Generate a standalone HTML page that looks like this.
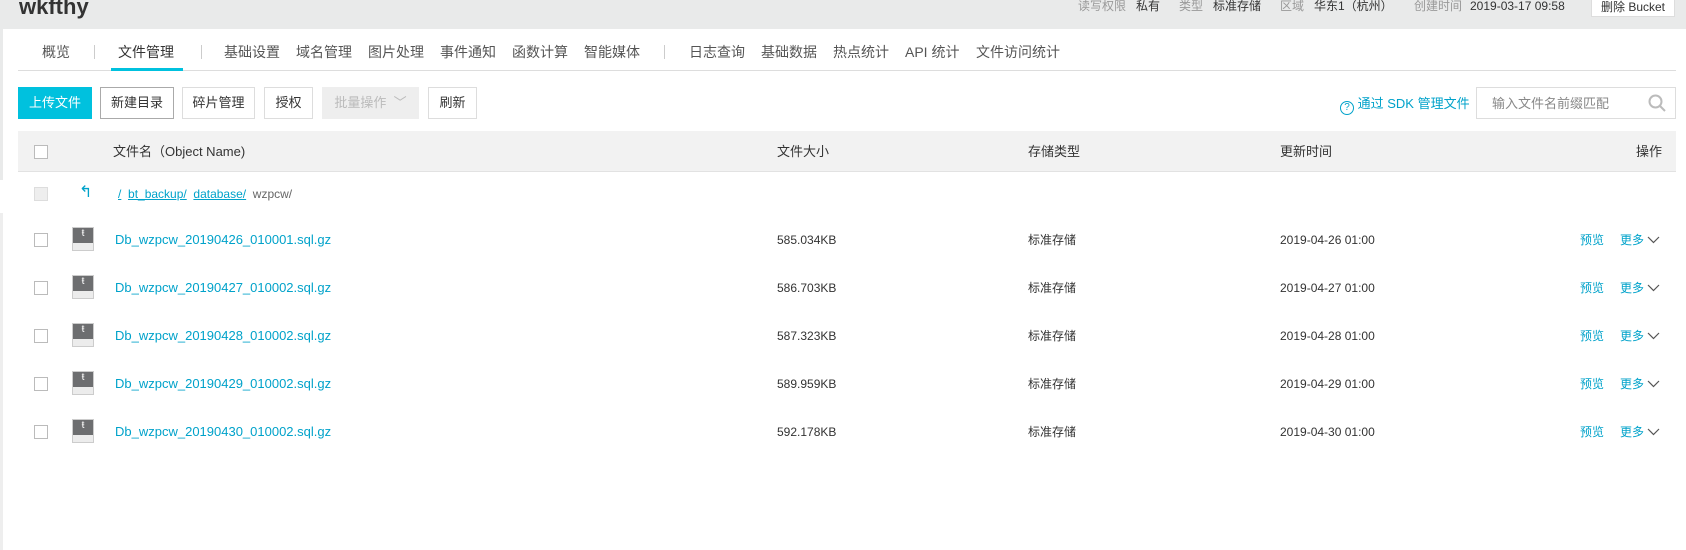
<!DOCTYPE html>
<html><head><meta charset="utf-8"><style>
*{margin:0;padding:0;box-sizing:border-box}
body{width:1686px;height:550px;background:#fff;position:relative;overflow:hidden;font-family:"Liberation Sans","Noto Sans CJK SC",sans-serif;color:#333;font-size:13px}
.a{position:absolute;white-space:nowrap;line-height:18px}
.hdr{left:0;top:0;width:1686px;height:29px;background:#e9eaea}
.g{color:#999}
.btn{position:absolute;top:87px;height:32px;border:1px solid #ddd;background:#fff;font-size:13px;line-height:30px;text-align:center;color:#333}
.cb{position:absolute;width:14px;height:14px;border:1px solid #bbb;background:#fff}
.lk{color:#00a2ca}
.nav{top:43px;font-size:14px;color:#555}
.sep{top:45px;width:1px;height:14px;background:#ccc}
.m{top:-3px;font-size:12px}
</style></head><body>
<div class="a hdr"></div>
<div class="a" style="left:0;top:29px;width:3px;height:151px;background:#e9eaea"></div>
<div class="a" style="left:0;top:213px;width:3px;height:337px;background:#eee"></div>
<div class="a" style="left:19px;top:-5px;font-size:22px;line-height:24px;font-weight:bold;color:#333">wkfthy</div>
<div class="a m" style="left:1078px"><span class="g">读写权限</span></div>
<div class="a m" style="left:1136px">私有</div>
<div class="a m" style="left:1179px"><span class="g">类型</span></div>
<div class="a m" style="left:1213px">标准存储</div>
<div class="a m" style="left:1280px"><span class="g">区域</span></div>
<div class="a m" style="left:1314px">华东1（杭州）</div>
<div class="a m" style="left:1414px"><span class="g">创建时间</span></div>
<div class="a m" style="left:1470px">2019-03-17 09:58</div>
<div class="a" style="left:1591px;top:-1px;width:84px;height:18px;background:#fff;border:1px solid #ddd;font-size:12px;line-height:14px;text-align:center">删除 Bucket</div>

<div class="a nav" style="left:42px">概览</div>
<div class="a sep" style="left:94px"></div>
<div class="a nav" style="left:118px;color:#333">文件管理</div>
<div class="a sep" style="left:201px"></div>
<div class="a nav" style="left:224px">基础设置</div>
<div class="a nav" style="left:296px">域名管理</div>
<div class="a nav" style="left:368px">图片处理</div>
<div class="a nav" style="left:440px">事件通知</div>
<div class="a nav" style="left:512px">函数计算</div>
<div class="a nav" style="left:584px">智能媒体</div>
<div class="a sep" style="left:664px"></div>
<div class="a nav" style="left:689px">日志查询</div>
<div class="a nav" style="left:761px">基础数据</div>
<div class="a nav" style="left:833px">热点统计</div>
<div class="a nav" style="left:905px">API 统计</div>
<div class="a nav" style="left:976px">文件访问统计</div>
<div class="a" style="left:18px;top:70px;width:1658px;height:1px;background:#ddd"></div>
<div class="a" style="left:111px;top:68px;width:72px;height:3px;background:#00c1de"></div>

<div class="btn" style="left:18px;width:74px;background:#00c1de;border-color:#00c1de;color:#fff">上传文件</div>
<div class="btn" style="left:100px;width:74px;border-color:#aaa">新建目录</div>
<div class="btn" style="left:182px;width:73px">碎片管理</div>
<div class="btn" style="left:264px;width:49px">授权</div>
<div class="btn" style="left:322px;width:97px;background:#eee;border-color:#eee;color:#bbb">批量操作 &nbsp;﹀</div>
<div class="btn" style="left:428px;width:49px">刷新</div>
<div class="a lk" style="left:1340px;top:95px;font-size:13px"><span style="display:inline-block;width:14px;height:14px;border:1px solid #00a2ca;border-radius:50%;font-size:10px;line-height:12px;text-align:center;vertical-align:-2px">?</span> 通过 SDK 管理文件</div>
<div class="a" style="left:1476px;top:87px;width:200px;height:32px;border:1px solid #ddd"></div>
<div class="a" style="left:1492px;top:95px;color:#888">输入文件名前缀匹配</div>
<svg class="a" style="left:1648px;top:94px" width="18" height="18"><circle cx="7.5" cy="7.5" r="6" fill="none" stroke="#bbb" stroke-width="2"/><path d="M12 12 L17 17" stroke="#bbb" stroke-width="2"/></svg>

<div class="a" style="left:18px;top:131px;width:1658px;height:41px;background:#f2f2f2;border-bottom:1px solid #e2e2e2"></div>
<div class="cb" style="left:34px;top:145px"></div>
<div class="a" style="left:113px;top:143px">文件名（Object Name)</div>
<div class="a" style="left:777px;top:143px">文件大小</div>
<div class="a" style="left:1028px;top:143px">存储类型</div>
<div class="a" style="left:1280px;top:143px">更新时间</div>
<div class="a" style="left:1636px;top:143px">操作</div>

<div class="cb" style="left:34px;top:187px;background:#eee;border-color:#ddd"></div>
<div class="a lk" style="left:79px;top:184px;font-size:16px">↰</div>
<div class="a" style="left:118px;top:185px;font-size:12px"><span class="lk" style="text-decoration:underline">/</span>&nbsp; <span class="lk" style="text-decoration:underline">bt_backup/</span>&nbsp; <span class="lk" style="text-decoration:underline">database/</span>&nbsp; <span style="color:#666">wzpcw/</span></div>

<div id="rows"></div>
<script>
var d=[["20190426_010001","585.034KB","2019-04-26 01:00"],["20190427_010002","586.703KB","2019-04-27 01:00"],["20190428_010002","587.323KB","2019-04-28 01:00"],["20190429_010002","589.959KB","2019-04-29 01:00"],["20190430_010002","592.178KB","2019-04-30 01:00"]];
var h="";d.forEach(function(r,i){var y=240+i*48;
h+='<div class="cb" style="left:34px;top:'+(y-7)+'px"></div>';
h+='<div class="a" style="left:72px;top:'+(y-13)+'px;width:22px;height:24px;background:#ececec;border:1px solid #ccc"><div style="height:15px;background:#6d6e70;color:#fff;font-size:10px;line-height:12px;text-align:center">ŧ</div></div>';
h+='<div class="a lk" style="left:115px;top:'+(y-9)+'px">Db_wzpcw_'+r[0]+'.sql.gz</div>';
h+='<div class="a" style="left:777px;top:'+(y-9)+'px;font-size:12px">'+r[1]+'</div>';
h+='<div class="a" style="left:1028px;top:'+(y-9)+'px;font-size:12px">标准存储</div>';
h+='<div class="a" style="left:1280px;top:'+(y-9)+'px;font-size:12px">'+r[2]+'</div>';
h+='<div class="a lk" style="left:1580px;top:'+(y-9)+'px;font-size:12px">预览</div>';
h+='<div class="a lk" style="left:1620px;top:'+(y-9)+'px;font-size:12px">更多</div>';
h+='<svg class="a" style="left:1647px;top:'+(y-4)+'px" width="13" height="8"><path d="M1 1 L6.5 6.5 L12 1" fill="none" stroke="#555" stroke-width="1.2"/></svg>';
});document.getElementById("rows").innerHTML=h;
</script>
</body></html>
